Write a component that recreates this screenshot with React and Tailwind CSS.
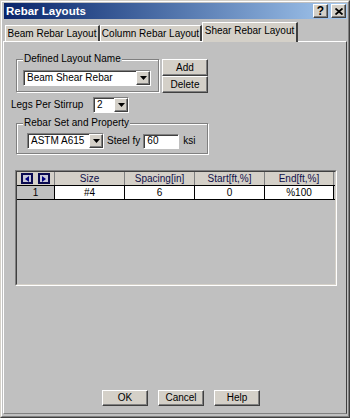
import React from "react";

const raised =
  "border border-t-white border-l-white border-b-[#404040] border-r-[#404040] shadow-[inset_-1px_-1px_0_#808080]";
const sunken =
  "border border-t-[#808080] border-l-[#808080] border-b-white border-r-white shadow-[inset_1px_1px_0_#404040]";

function DownArrow() {
  return (
    <svg width="7" height="4" viewBox="0 0 7 4">
      <path d="M0 0h7L3.5 4z" fill="#000" />
    </svg>
  );
}

function Combo({ text, className }) {
  return (
    <div className={`flex bg-white ${sunken} ${className}`}>
      <span className="flex-1 pl-[3px] leading-[12px] self-center whitespace-nowrap overflow-hidden">{text}</span>
      <div className={`w-[14px] flex items-center justify-center bg-[#d4d0c8] ${raised}`}>
        <DownArrow />
      </div>
    </div>
  );
}

function GroupBox({ label, className, children }) {
  return (
    <div
      className={`relative border border-[#808080] shadow-[1px_1px_0_#fff,inset_1px_1px_0_#fff] ${className}`}
    >
      <span className="absolute -top-[7px] left-[6px] px-[1px] bg-[#c0c0c0] leading-[12px] whitespace-nowrap">
        {label}
      </span>
      {children}
    </div>
  );
}

function Btn({ children, className }) {
  return (
    <div
      className={`flex items-center justify-center bg-[#d4d0c8] leading-[12px] ${raised} ${className}`}
    >
      {children}
    </div>
  );
}

function NavBtn({ dir }) {
  return (
    <div className="w-[12px] h-[11px] border-2 border-[#0a0a50] bg-[#c8c8d8] flex items-center justify-center">
      <svg width="4" height="6" viewBox="0 0 4 6">
        {dir === "left" ? (
          <path d="M4 0v6L0 3z" fill="#000080" />
        ) : (
          <path d="M0 0v6l4-3z" fill="#000080" />
        )}
      </svg>
    </div>
  );
}

const COLS = [
  { name: "Size", w: "w-[70px]", val: "#4" },
  { name: "Spacing[in]", w: "w-[70px]", val: "6" },
  { name: "Start[ft,%]", w: "w-[70px]", val: "0" },
  { name: "End[ft,%]", w: "w-[69px]", val: "%100" },
];

export default function App() {
  return (
    <div className="w-[350px] h-[418px] overflow-hidden bg-[#c0c0c0] text-[10px] text-black font-['Liberation_Sans',Arial,sans-serif] border border-t-[#d4d0c8] border-l-[#d4d0c8] border-b-[#404040] border-r-[#404040]">
      <div className="h-full flex flex-col pl-[1px] pr-[1px] pb-[2px] border border-t-white border-l-white border-b-[#808080] border-r-[#808080]">
        {/* title bar */}
        <div className="mt-[1px] ml-[1px] h-[16px] flex items-center bg-gradient-to-r from-[#0a246a] to-[#a6caf0] pl-[2px] pr-[1px]">
          <span className="flex-1 text-white font-bold text-[11.5px] leading-[14px]">Rebar Layouts</span>
          <Btn className="w-[15px] h-[14px] font-bold text-[12px]">?</Btn>
          <Btn className="ml-[3px] w-[15px] h-[14px]">
            <svg width="8" height="7" viewBox="0 0 8 7">
              <path d="M0.5 0.5L7.5 6.5M7.5 0.5L0.5 6.5" stroke="#000" strokeWidth="1.8" />
            </svg>
          </Btn>
        </div>

        {/* tabs */}
        <div className="flex items-end h-[21px] pl-[2px] mt-[1px] whitespace-nowrap">
          <div className="h-[16px] w-[95px] flex items-center justify-center bg-[#d4d0c8] border-t border-l border-white border-r-2 border-r-[#404040] leading-[12px]">
            Beam Rebar Layout
          </div>
          <div className="h-[16px] w-[102px] flex items-center justify-center bg-[#d4d0c8] border-t border-l border-white border-r-2 border-r-[#404040] leading-[12px]">
            Column Rebar Layout
          </div>
          <div className="relative top-[1px] h-[20px] w-[96px] pb-[3px] flex items-center justify-center bg-[#d4d0c8] border-t border-l border-white border-r-2 border-r-[#404040] leading-[12px]">
            Shear Rebar Layout
          </div>
        </div>

        {/* panel */}
        <div className="flex-1 flex flex-col border border-t-white border-l-white border-b-[#808080] border-r-[#404040]">
          <div className="flex items-start mt-[17px] ml-[12px]">
            <GroupBox label="Defined Layout Name" className="w-[143px] h-[33px]">
              <Combo text="Beam Shear Rebar" className="mt-[10px] ml-[6px] w-[128px] h-[16px]" />
            </GroupBox>
            <div className="ml-[3px] flex flex-col">
              <Btn className="w-[46px] h-[17px]">Add</Btn>
              <Btn className="w-[46px] h-[17px]">Delete</Btn>
            </div>
          </div>

          <div className="flex items-center mt-[4px] ml-[7px] h-[16px]">
            <span className="w-[82px] leading-[12px]">Legs Per Stirrup</span>
            <Combo text="2" className="w-[36px] h-[16px]" />
          </div>

          <GroupBox label="Rebar Set and Property" className="mt-[10px] ml-[12px] w-[192px] h-[31px]">
            <div className="flex items-center mt-[9px] ml-[10px]">
              <Combo text="ASTM A615" className="w-[77px] h-[16px]" />
              <span className="ml-[3px] leading-[12px] whitespace-nowrap">Steel fy</span>
              <div className={`ml-[3px] w-[36px] h-[15px] bg-white pl-[3px] leading-[12px] ${sunken}`}>60</div>
              <span className="ml-[4px] leading-[12px]">ksi</span>
            </div>
          </GroupBox>

          {/* grid */}
          <div className="mt-[16px] ml-[11px] w-[322px] h-[116px] border border-t-[#808080] border-l-[#808080] border-b-white border-r-white">
            <div className="h-full border border-t-[#404040] border-l-[#404040] border-b-[#d4d0c8] border-r-[#d4d0c8]">
              <div className="flex h-[14px] border-b border-black">
                <div className="w-[38px] flex items-center justify-center gap-[5px] bg-[#d4d0c8] border-r border-[#808080]">
                  <NavBtn dir="left" />
                  <NavBtn dir="right" />
                </div>
                {COLS.map((c) => (
                  <div
                    key={c.name}
                    className={`${c.w} flex items-center justify-center bg-[#d4d0c8] border-r border-[#808080] leading-[12px] text-[#10104a]`}
                  >
                    {c.name}
                  </div>
                ))}
              </div>
              <div className="flex h-[14px] border-b border-black">
                <div className="w-[38px] flex items-center justify-center bg-[#c0c0c0] border-r border-black leading-[12px]">
                  1
                </div>
                {COLS.map((c) => (
                  <div
                    key={c.name}
                    className={`${c.w} flex items-center justify-center bg-white border-r border-black leading-[12px]`}
                  >
                    {c.val}
                  </div>
                ))}
              </div>
            </div>
          </div>

          <div className="flex mt-[104px] ml-[98px] gap-[10px]">
            <Btn className="w-[46px] h-[16px]">OK</Btn>
            <Btn className="w-[46px] h-[16px]">Cancel</Btn>
            <Btn className="w-[46px] h-[16px]">Help</Btn>
          </div>
        </div>
      </div>
    </div>
  );
}
